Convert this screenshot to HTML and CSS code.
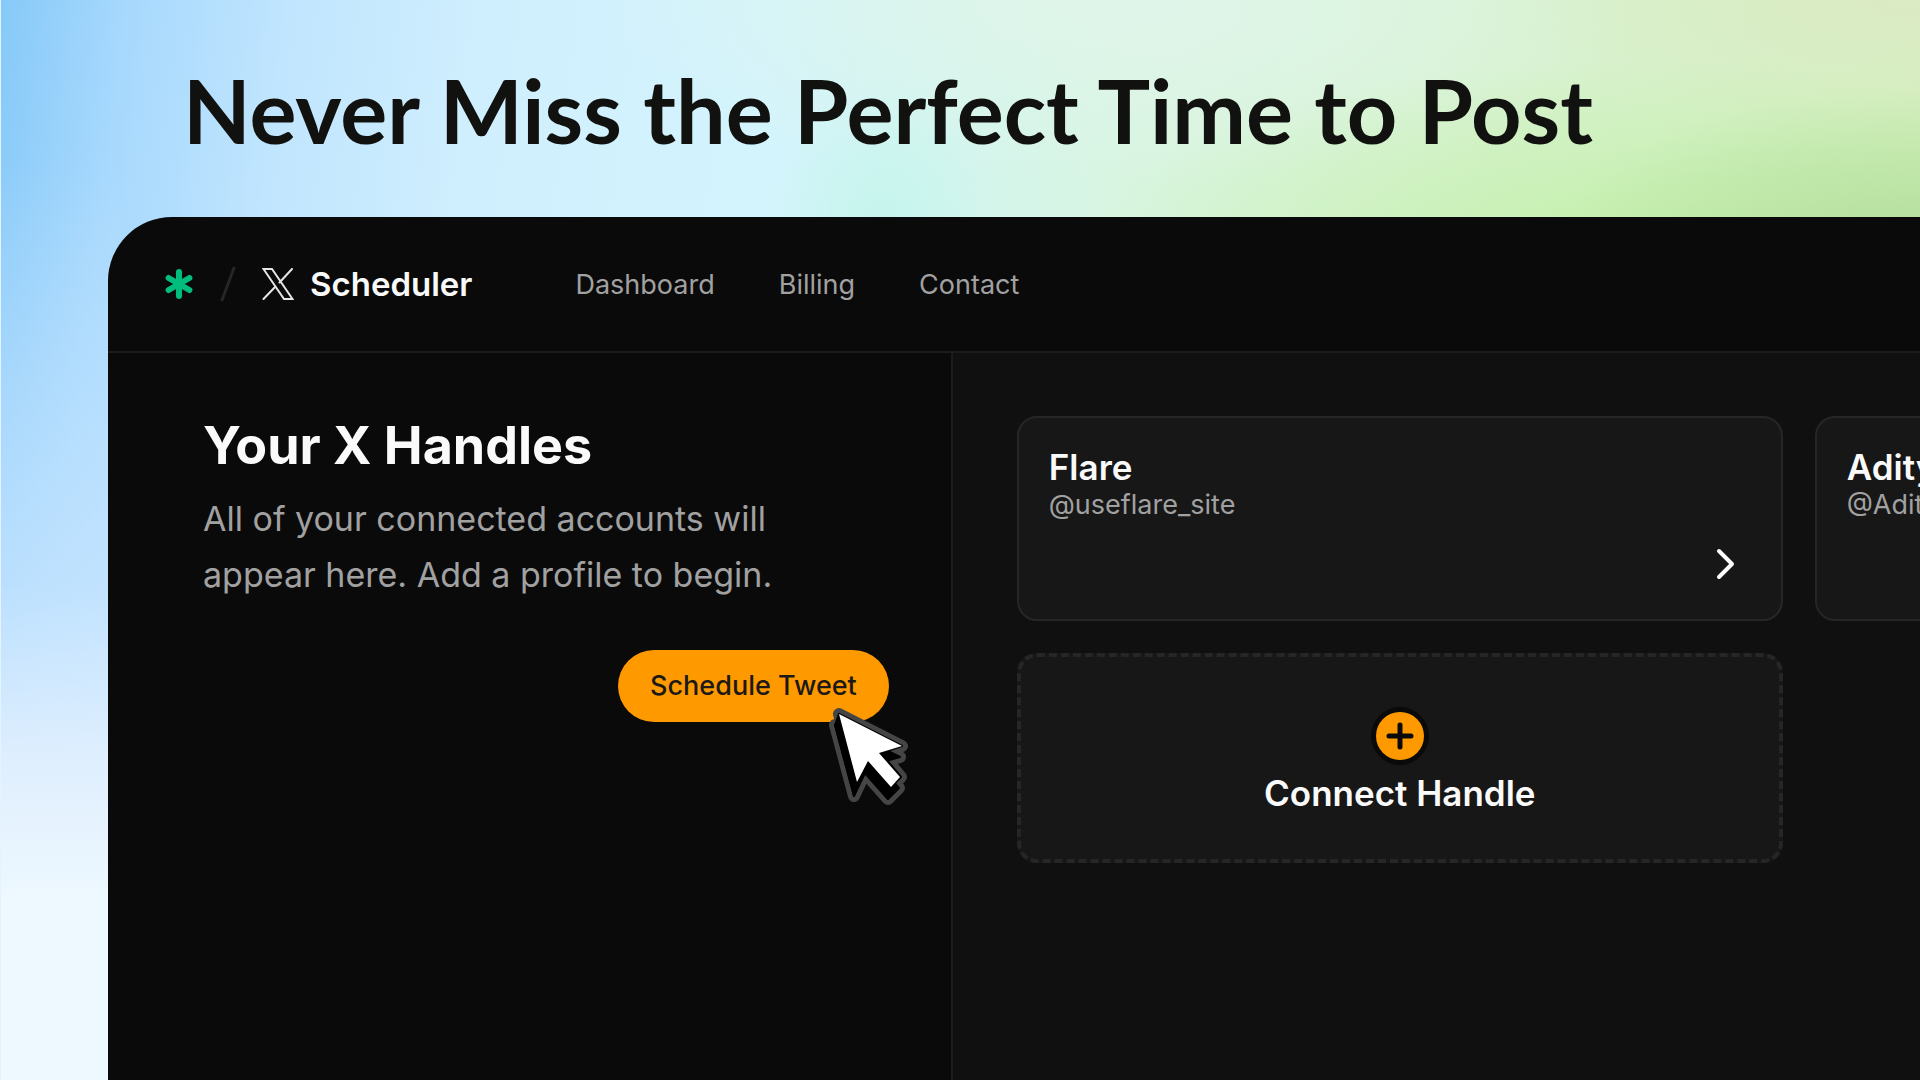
FILE: index.html
```
<!DOCTYPE html>
<html lang="en">
<head>
  <meta charset="UTF-8" />
  <meta name="viewport" content="width=device-width, initial-scale=1.0" />
  <title>X Scheduler</title>
  <link rel="stylesheet" href="styles.css">
</head>
<body>
  <h1 class="headline">Never Miss the Perfect Time to Post</h1>

  <div class="app">
    <header class="topbar">
      <div class="brand">
        <svg class="brand-star" viewBox="0 0 30 32" aria-hidden="true">
          <path d="M15 4v24M4.600 10l20.800 12M25.400 10l-20.800 12" />
        </svg>
        <svg class="brand-slash" viewBox="0 0 16 36" aria-hidden="true">
          <path d="M14 2L2 34" />
        </svg>
        <svg class="brand-x" viewBox="0 0 32 32" aria-hidden="true">
          <path d="M1.500 1h8.500l20.500 30h-8.500zM30 1L17.500 14.500M13.500 18.500L1.500 31" />
        </svg>
        <span class="brand-name">Scheduler</span>
      </div>
      <nav class="nav">
        <a href="#dashboard">Dashboard</a>
        <a href="#billing">Billing</a>
        <a href="#contact">Contact</a>
      </nav>
    </header>

    <div class="layout">
      <aside class="sidebar">
        <h2>Your X Handles</h2>
        <p>All of your connected accounts will<br>appear here. Add a profile to begin.</p>
        <div class="actions">
          <button class="schedule" type="button">Schedule Tweet</button>
          <svg class="cursor" viewBox="0 0 84 102" aria-hidden="true">
            <g class="cursor-outline">
              <path d="M10 8L73 40L52 47L72 71L62 81L39 55L28 76z" />
              <path d="M6 19L71 51L50 57L70 82L59 93L36 67L25 90z" />
            </g>
            <g class="cursor-shadow">
              <path d="M10 8L73 40L52 47L72 71L62 81L39 55L28 76z" />
              <path d="M6 19L71 51L50 57L70 82L59 93L36 67L25 90z" />
              <path d="M10 8L6 19L25 90L28 76zM62 81L59 93L36 67L39 55z" />
            </g>
            <path class="cursor-face" d="M10 8L73 40L50 47L71 71L62 81L39 55L28 76z" />
          </svg>
        </div>
      </aside>

      <main class="handles">
        <a class="card" href="#flare">
          <strong>Flare</strong>
          <span class="handle">@useflare_site</span>
          <svg class="chevron" viewBox="0 0 32 32" aria-hidden="true">
            <path d="M10 3l13 13l-13 13" />
          </svg>
        </a>
        <a class="card" href="#aditya">
          <strong>Aditya</strong>
          <span class="handle">@Aditya</span>
          <svg class="chevron" viewBox="0 0 32 32" aria-hidden="true">
            <path d="M10 3l13 13l-13 13" />
          </svg>
        </a>
        <button class="card connect" type="button">
          <svg class="plus" viewBox="0 0 58 58" aria-hidden="true">
            <circle cx="29" cy="29" r="29" fill="#0a0a0a" />
            <circle cx="29" cy="29" r="24" fill="#ff9900" />
            <path d="M29 18v22M18 29h22" />
          </svg>
          Connect Handle
        </button>
      </main>
    </div>
  </div>
</body>
</html>
```
FILE: styles.css
```
* {
  box-sizing: border-box;
}

body {
  margin: 0;
  height: 100vh;
  overflow: hidden;
  display: flex;
  flex-direction: column;
  font-family: Inter, "Liberation Sans", sans-serif;
  color: #fafafa;
  background:
    linear-gradient(#e4f3fe, #e4f3fe) 0 0 / 1px 100% no-repeat,
    linear-gradient(to top, #edf8ff 20%, #e0effe 34%, rgba(200, 229, 255, 0.7) 54%, rgba(200, 229, 255, 0)) 0 100% / 120px 85% no-repeat,
    radial-gradient(ellipse 360px 150px at 100% 240px, #b4df9d, rgba(180, 223, 157, 0)),
    radial-gradient(ellipse 560px 180px at 86% 240px, #c4f0ac, rgba(196, 240, 172, 0)),
    radial-gradient(ellipse 420px 140px at 100% 0, #dbebc4, rgba(219, 235, 196, 0)),
    radial-gradient(ellipse 110px 150px at 46% 230px, #c5f5ec, rgba(197, 245, 236, 0)),
    radial-gradient(ellipse 520px 190px at 58% 0, #e0f5ea, rgba(224, 245, 234, 0)),
    linear-gradient(97deg, #86c9f8 0, #a6d8fd 6%, #c0e5fe 14%, #d0effe 24%, #d3f4fd 38%, #d2f5f1 46%, #d8f5e0 56%, #d9f3d5 70%, #d3eeba 100%);
}

.headline {
  margin: 0;
  padding: 60px 0 57px 183px;
  font-family: Lato, sans-serif;
  font-size: 88px;
  line-height: 100px;
  font-weight: 700;
  white-space: nowrap;
  color: #11110f;
}

.app {
  flex: 1;
  display: flex;
  flex-direction: column;
  margin-left: 108px;
  overflow: hidden;
  border-top-left-radius: 64px;
  background-color: #0a0a0a;
}

.topbar {
  display: flex;
  align-items: center;
  gap: 103px;
  height: 136px;
  padding-left: 56px;
  border-bottom: 2px solid #1c1c1c;
}

.brand {
  display: flex;
  align-items: center;
}

.brand svg {
  fill: none;
  stroke-linecap: round;
}

.brand-star {
  width: 30px;
  height: 32px;
  stroke: #00bc7d;
  stroke-width: 6;
}

.brand-slash {
  width: 16px;
  height: 36px;
  margin: 0 26px;
  stroke: #262626;
  stroke-width: 3;
}

.brand-x {
  width: 32px;
  height: 32px;
  stroke: #e5e5e5;
  stroke-width: 2;
}

.brand-name {
  margin-left: 16px;
  font-size: 33px;
  font-weight: 600;
}

.nav {
  display: flex;
  gap: 64px;
}

.nav a {
  font-size: 27px;
  color: #a1a1a1;
  text-decoration: none;
}

.layout {
  flex: 1;
  display: flex;
}

.sidebar {
  flex: none;
  width: 44vw;
  padding: 59px 62px 0 95px;
  border-right: 2px solid #1c1c1c;
}

.sidebar h2 {
  margin: 0 0 11px;
  font-size: 52px;
  line-height: 68px;
  font-weight: 700;
}

.sidebar p {
  margin: 0;
  font-size: 34px;
  line-height: 56px;
  white-space: nowrap;
  color: #a1a1a1;
}

.actions {
  position: relative;
  display: flex;
  justify-content: flex-end;
  margin-top: 47px;
}

.schedule {
  height: 72px;
  padding: 0 32px 2px;
  border: none;
  border-radius: 36px;
  font-family: inherit;
  font-size: 27px;
  font-weight: 500;
  color: #1c1917;
  background-color: #ff9900;
  cursor: pointer;
}

.cursor {
  position: absolute;
  top: 56px;
  right: -24px;
  width: 84px;
  height: 102px;
  stroke-linejoin: round;
}

.cursor-outline {
  fill: #454545;
  stroke: #454545;
  stroke-width: 12;
}

.cursor-shadow {
  fill: #000;
  stroke: #000;
  stroke-width: 2;
}

.cursor-face {
  fill: #fff;
}

.handles {
  flex: 1;
  display: grid;
  grid-template-columns: repeat(2, calc(40vw - 2px));
  align-content: start;
  gap: 32px;
  padding: 63px 64px;
  overflow: hidden;
  background-color: #101010;
}

.card {
  display: flex;
  flex-direction: column;
  min-height: 205px;
  padding: 29px 30px;
  border: 2px solid #262626;
  border-radius: 20px;
  color: #fafafa;
  background-color: #171717;
  text-decoration: none;
}

.card strong {
  font-size: 35px;
  line-height: 40px;
  font-weight: 600;
}

.handle {
  font-size: 27px;
  line-height: 36px;
  color: #a1a1a1;
}

.chevron {
  align-self: flex-end;
  width: 32px;
  height: 32px;
  margin: 25px 10px 0 0;
  fill: none;
  stroke: #fafafa;
  stroke-width: 4;
  stroke-linecap: round;
  stroke-linejoin: round;
}

.connect {
  align-items: center;
  justify-content: center;
  gap: 8px;
  min-height: 210px;
  padding: 32px 30px 28px;
  border: 4px dashed #262626;
  font-family: inherit;
  font-size: 35px;
  line-height: 40px;
  font-weight: 600;
  cursor: pointer;
}

.plus {
  width: 58px;
  height: 58px;
}

.plus path {
  stroke: #0a0a0a;
  stroke-width: 5;
  stroke-linecap: round;
}
```
